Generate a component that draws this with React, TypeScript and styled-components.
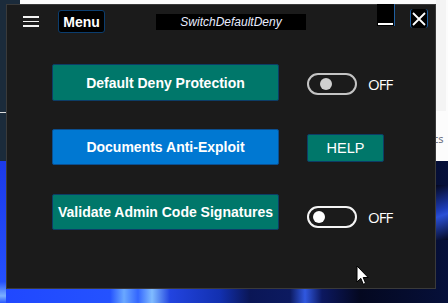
import React from "react";
import styled, { createGlobalStyle } from "styled-components";

const Global = createGlobalStyle`
  html, body { margin: 0; padding: 0; }
  body {
    width: 448px;
    height: 303px;
    overflow: hidden;
    font-family: "Liberation Sans", Arial, sans-serif;
  }
`;

const Desktop = styled.div`
  position: relative;
  width: 448px;
  height: 303px;
  box-sizing: border-box;
  padding: 4px 0 0 6px;
  overflow: hidden;
  background:
    linear-gradient(#dcdcdc, #dcdcdc) 0 112px / 6px 1px no-repeat,
    linear-gradient(#f4f4f4, #f4f4f4) 436px 0 / 10px 111px no-repeat,
    linear-gradient(#1b2b3b, #1b2b3b) 0 0 / 20px 161px no-repeat,
    linear-gradient(#fcfcfc, #fcfcfc) 0 0 / 100% 161px no-repeat,
    linear-gradient(160deg, #040820 0%, #1d3cb8 45%, #2a4fd6 55%, #040820 100%) 436px 185px / 12px 55px no-repeat,
    linear-gradient(#1c3ae8, #2450ff 85%, #7ab0ff 95%, #2a58ff) 0 161px / 6px 142px no-repeat,
    linear-gradient(
      to right,
      #8ab8ff 0px,
      #2048ff 6px,
      #2452ff 110px,
      #6aa8ff 124px,
      #3366ff 138px,
      #80bcff 152px,
      #2244e0 170px,
      #1230b0 220px,
      #0a1656 250px,
      #0c1a60 290px,
      #3058e0 305px,
      #0c1860 322px,
      #040820 360px,
      #06103a 448px
    ) 0 161px / 100% 142px no-repeat,
    #040820;
`;

const DesktopText = styled.span`
  position: absolute;
  left: 433px;
  top: 131px;
  font-family: "Noto Sans", sans-serif;
  font-size: 11px;
  color: #6b6f80;
`;

const Window = styled.div`
  position: relative;
  z-index: 1;
  width: 430px;
  height: 285px;
  box-sizing: border-box;
  background: #1b1b1b;
  border: 1px solid #3a3a3a;
  display: flex;
  flex-direction: column;
`;

const TitleBar = styled.div`
  display: flex;
  align-items: flex-start;
  height: 35px;
  flex-shrink: 0;
`;

const Hamburger = styled.div`
  margin: 11px 0 0 16px;
  width: 16px;
  display: flex;
  flex-direction: column;
  gap: 3px;
`;

const HamLine = styled.span`
  display: block;
  height: 1.5px;
  background: #f2f2f2;
`;

const MenuButton = styled.div`
  margin: 5px 0 0 19px;
  width: 47px;
  height: 23px;
  box-sizing: border-box;
  background: #000;
  border: 1px solid #0b3d6e;
  border-radius: 3px;
  color: #fff;
  font-weight: bold;
  font-size: 14px;
  display: flex;
  align-items: center;
  justify-content: center;
`;

const TitleBox = styled.div`
  margin: 9px 0 0 51px;
  width: 150px;
  height: 16px;
  background: #000;
  color: #e8ecff;
  font-style: italic;
  font-size: 12px;
  display: flex;
  align-items: center;
  justify-content: center;
`;

const MinButton = styled.div`
  margin: -1px 0 0 71px;
  width: 17px;
  height: 21px;
  padding-bottom: 1px;
  background: #000;
  border-right: 1px solid #1f5fa0;
  display: flex;
  align-items: flex-end;
  justify-content: center;
`;

const MinBar = styled.span`
  width: 15px;
  height: 2px;
  background: #fff;
`;

const CloseButton = styled.div`
  margin: 4px 0 0 15px;
  width: 18px;
  height: 19px;
  box-sizing: border-box;
  background: #000;
  border-left: 1px solid #1f5fa0;
  border-right: 1px solid #1f5fa0;
  border-radius: 3px;
  display: flex;
  align-items: center;
  justify-content: center;
`;

const Content = styled.div`
  margin-top: 24px;
  padding-left: 45px;
  display: grid;
  grid-template-columns: 227px auto;
  grid-auto-rows: 36px;
  column-gap: 28px;
  row-gap: 29px;
  align-items: center;
`;

const ActionButton = styled.div<{ $color: "teal" | "blue"; $tall?: boolean }>`
  height: ${(p) => (p.$tall ? 37 : 36)}px;
  box-sizing: border-box;
  background: ${(p) => (p.$color === "teal" ? "#00776a" : "#0078d2")};
  border: 1px solid ${(p) => (p.$color === "teal" ? "#0d3d66" : "#0b4f90")};
  border-radius: 2px;
  color: #fff;
  font-weight: bold;
  font-size: 14px;
  display: flex;
  align-items: center;
  justify-content: center;
  white-space: nowrap;
  align-self: start;
`;

const SideCell = styled.div<{ $shift?: number }>`
  display: flex;
  align-items: center;
  gap: 11px;
  transform: translateY(${(p) => p.$shift ?? 0}px);
`;

const Track = styled.div<{ $dim?: boolean }>`
  position: relative;
  width: 50px;
  height: 22px;
  box-sizing: border-box;
  border: 2px solid ${(p) => (p.$dim ? "#c4c4c4" : "#f4f4f4")};
  border-radius: 11px;
`;

const Knob = styled.span<{ $dim?: boolean; $left: number }>`
  position: absolute;
  top: 3px;
  left: ${(p) => p.$left}px;
  width: 12px;
  height: 12px;
  border-radius: 50%;
  background: ${(p) => (p.$dim ? "#d0d0d0" : "#ffffff")};
`;

const StateLabel = styled.span`
  font-family: "Open Sans", "Noto Sans", sans-serif;
  font-size: 15px;
  color: #fff;
  letter-spacing: -0.9px;
`;

const HelpButton = styled.div`
  width: 77px;
  height: 28px;
  box-sizing: border-box;
  background: #00776a;
  border: 1px solid #0d3d66;
  border-radius: 2px;
  color: #fff;
  font-size: 14.5px;
  display: flex;
  align-items: center;
  justify-content: center;
`;

const Cursor = styled.svg`
  position: absolute;
  left: 349px;
  top: 260px;
`;

const Toggle: React.FC<{ dim?: boolean; knobLeft: number }> = ({ dim, knobLeft }) => (
  <Track $dim={dim}>
    <Knob $dim={dim} $left={knobLeft} />
  </Track>
);

export default function App() {
  return (
    <>
      <Global />
      <Desktop>
        <DesktopText>cs</DesktopText>
        <Window>
          <TitleBar>
            <Hamburger>
              <HamLine />
              <HamLine />
              <HamLine />
            </Hamburger>
            <MenuButton>Menu</MenuButton>
            <TitleBox>SwitchDefaultDeny</TitleBox>
            <MinButton>
              <MinBar />
            </MinButton>
            <CloseButton>
              <svg width="14" height="14" viewBox="0 0 14 14">
                <path d="M1 1 L13 13 M13 1 L1 13" stroke="#fff" strokeWidth="1.8" />
              </svg>
            </CloseButton>
          </TitleBar>
          <Content>
            <ActionButton $color="teal" $tall>
              Default Deny Protection
            </ActionButton>
            <SideCell $shift={2}>
              <Toggle dim knobLeft={11} />
              <StateLabel>OFF</StateLabel>
            </SideCell>
            <ActionButton $color="blue">Documents Anti-Exploit</ActionButton>
            <SideCell $shift={1}>
              <HelpButton>HELP</HelpButton>
            </SideCell>
            <ActionButton $color="teal">Validate Admin Code Signatures</ActionButton>
            <SideCell $shift={5}>
              <Toggle knobLeft={4} />
              <StateLabel>OFF</StateLabel>
            </SideCell>
          </Content>
          <Cursor width="14" height="22" viewBox="0 0 14 22">
            <path
              d="M1 1 L1 17 L4.8 13.3 L7.3 19.3 L9.6 18.3 L7.2 12.5 L12.2 12.5 Z"
              fill="#fff"
              stroke="#000"
              strokeWidth="1"
              strokeLinejoin="miter"
            />
          </Cursor>
        </Window>
      </Desktop>
    </>
  );
}
